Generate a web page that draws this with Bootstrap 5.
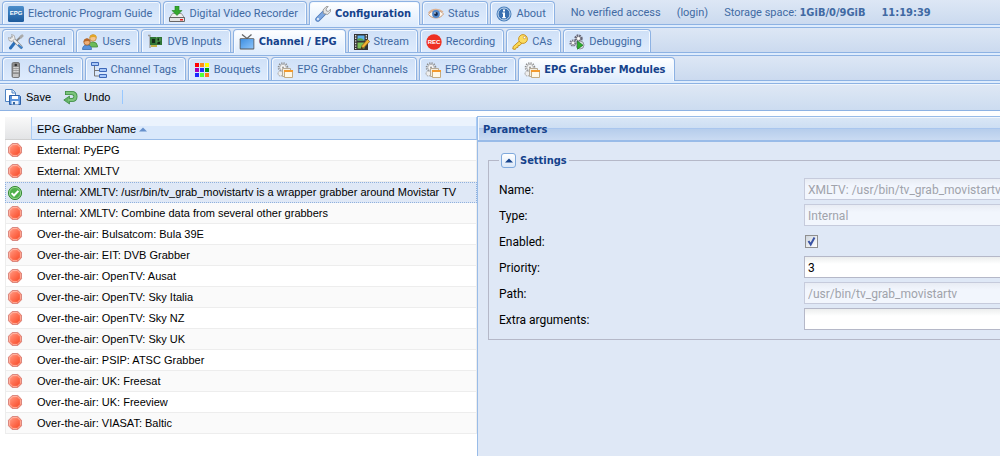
<!DOCTYPE html>
<html lang="en">
<head>
<meta charset="utf-8">
<meta name="viewport" content="width=device-width, initial-scale=1">
<title>Tvheadend - EPG Grabber Modules</title>
<link href="https://cdn.jsdelivr.net/npm/bootstrap@5.3.0/dist/css/bootstrap.min.css" rel="stylesheet">
<style>
:root { --line: #8db2e3; --ui: Roboto, Tahoma, sans-serif; --ui-bold: "DejaVu Sans Condensed", Tahoma, sans-serif; --arial: "Liberation Sans", Arial, sans-serif; }
body { font: 11px/16px var(--ui); color: #000; background: #fff; min-height: 100vh; overflow-x: hidden; }
svg { flex: none; }
b { font-family: var(--ui-bold); }
.tabstrip { background: linear-gradient(#dde7f5, #cbdaef); border-bottom: 1px solid var(--line); padding: 1px 2px 0; height: 25px; gap: 2px; }
.tabstrip + .tabstrip { border-top: 1px solid var(--line); margin-top: 2px; height: 26px; }
.tabstrip .nav-link { display: flex; align-items: center; gap: 4px; height: 23px; padding: 1px 8px 0 5px; color: #416aa3; border: 1px solid var(--line); border-bottom: 0; border-radius: 4px 4px 0 0; background: linear-gradient(#cfe0f7, #deebfd); box-shadow: inset 1px 1px #f4f9ff, inset -1px 0 #f4f9ff; white-space: nowrap; }
.tabstrip .nav-link.active { color: #15428b; font-family: var(--ui-bold); font-weight: 700; background: linear-gradient(#fff, #deecfd); height: 24px; margin-bottom: -1px; }
.tabs-bg { background: #deecfd; }
.statusline { color: #416aa3; gap: 16px; margin-left: 14px; padding-top: 1px; white-space: nowrap; }
.statusline a { color: inherit; text-decoration: none; }
.actions { height: 28px; margin-top: 2px; border-top: 1px solid var(--line); border-bottom: 1px solid var(--line); box-shadow: inset 0 1px #f0f5fb; background: linear-gradient(#dfe8f5, #ccdcf0); padding: 0 5px; }
.actions button { font: 11px/16px var(--arial); border: 0; background: none; padding: 0; margin-right: 12px; gap: 5px; }
.actions .vr { width: 1px; height: 14px; background: #98c8ff; opacity: 1; margin-top: 6px; }
.gridpane { width: 47.7%; padding: 6px 0 0 5px; }
.gridpane table { width: 100%; font: 11px/15px var(--arial); border-collapse: separate; border-spacing: 0; }
.gridpane th { height: 23px; padding: 2px 5px 0; font-weight: 400; border-bottom: 1px solid #99bce8; background: linear-gradient(#ebf3fd 39%, #d9e8fb 39%); border-right: 1px solid #aaccf6; }
.gridpane th:first-child { width: 27px; padding: 0; background: linear-gradient(#f9f9f9, #e3e4e6); border-bottom-color: #d0d0d0; }
.gridpane td { height: 21px; padding: 0 5px; border-bottom: 1px solid #ededed; border-right: 1px solid #ededed; white-space: nowrap; }
.gridpane td:first-child { padding: 0 0 0 1px; border-left: 1px solid #ededed; border-right: 0; }
.gridpane td svg { display: block; }
.gridpane tbody tr:nth-child(even) td { background: #fafafa; }
.gridpane tbody tr.selected td { background: #dfe8f6; border-top: 1px dotted #8fb0dd; border-bottom: 1px dotted #8fb0dd; }
.gridpane tbody tr.selected td:first-child { border-left: 1px dotted #8fb0dd; }
.gridpane tbody tr.selected td:last-child { border-right: 1px dotted #8fb0dd; }
.params { margin-top: 5px; background: #dfe8f6; border: solid #99bce8; border-width: 1px 0 0 1px; }
.params h2 { font: 700 11px/16px var(--ui-bold); color: #15428b; margin: 0; height: 25px; padding: 5px 5px 0; border-bottom: 2px solid #99bbe8; box-shadow: inset 1px 1px #f4f8fd; background: linear-gradient(#dae7f6, #cddef3 11px, #a9c6ee 11px, #a9c6ee 12px, #b6cdec 12px, #cadbf2); }
.params fieldset { margin: 10px 0 0 10px; border: solid #b5b8c8; border-width: 1px 0 1px 1px; padding: 0 0 5px 10px; }
.params legend { float: none; width: auto; font: 700 11px/18px var(--ui-bold); color: #15428b; margin: 0 0 10px; padding: 0 2px; gap: 4px; background: #dfe8f6; height: 16px; }
.params legend span { padding-top: 2px; }
.params legend button { width: 15px; height: 15px; padding: 0; border: 1px solid #7fa9dc; border-radius: 3px; background: linear-gradient(#fff, #dbe8f8); }
.field { height: 22px; margin-bottom: 4px; }
.field label { width: 305px; flex: none; font-size: 12px; padding-top: 2px; }
.field input[type=text] { font: 12px/16px var(--ui); flex: 1; min-width: 0; height: 22px; border: solid #b5b8c8; border-width: 1px 0 1px 1px; border-radius: 0; padding: 2px 0 0 3px; background: linear-gradient(#eceeee, #fff 7px); }
.field input[type=text]:disabled { color: #a0a3ab; border-color: #c6cbdc; background: linear-gradient(#e8ecf4, #f2f6fd 7px); }
.field input[type=checkbox] { appearance: none; width: 13px; height: 13px; margin: 0 0 0 1px; border: 1px solid #8f8f8f; background: linear-gradient(135deg, #cfd6de, #fff); }
.field input:checked { background: url("data:image/svg+xml,%3Csvg xmlns='http://www.w3.org/2000/svg' viewBox='0 0 11 11'%3E%3Cpath d='M2.5 5l2.2 3.5L8.5 1.5' fill='none' stroke='%233a53a4' stroke-width='2'/%3E%3C/svg%3E"), linear-gradient(135deg, #cfd6de, #fff); }
</style>
</head>
<body class="d-flex flex-column">
<svg width="0" height="0" class="position-absolute" aria-hidden="true">
  <defs>
    <linearGradient id="rg" x1="0" y1="0" x2="1" y2="1"><stop offset="0" stop-color="#ffa590"/><stop offset=".45" stop-color="#ff7457"/><stop offset="1" stop-color="#f5401c"/></linearGradient>
    <linearGradient id="bg" x1="0" y1="0" x2="0" y2="1"><stop offset="0" stop-color="#4c8ecb"/><stop offset="1" stop-color="#1c5a9c"/></linearGradient>
    <linearGradient id="tv" x1="0" y1="0" x2="1" y2="1"><stop offset="0" stop-color="#3f8fe0"/><stop offset="1" stop-color="#8cc4fb"/></linearGradient>
    <symbol id="off" viewBox="0 0 16 16"><path d="M5.200 1.500h5.600l3.700 3.700v5.600l-3.700 3.700H5.200l-3.700-3.700V5.200z" fill="url(#rg)" stroke="#d98880"/><path d="M5.700 2.600h4.600l3.100 3.100v4.600l-3.100 3.100H5.700l-3.100-3.100V5.700z" fill="none" stroke="#ffc4b5" stroke-width=".8"/></symbol>
    <symbol id="on" viewBox="0 0 16 16"><circle cx="8" cy="8" r="6.600" fill="#4fb04a" stroke="#3a8c38"/><circle cx="8" cy="8" r="5.600" fill="none" stroke="#a5dba0" stroke-width=".8"/><path d="M4.600 8.100l2.400 2.400 4.400-4.600" fill="none" stroke="#fff" stroke-width="2"/></symbol>
    <symbol id="grab" viewBox="0 0 16 16"><circle cx="6" cy="5.500" r="4.400" fill="none" stroke="#8c8c8c" stroke-width="1.800" stroke-dasharray="1.200 1.100"/><circle cx="6" cy="5.500" r="3.200" fill="#f4f4f4" stroke="#aaa" stroke-width=".8"/><circle cx="6" cy="5.500" r="1" fill="#999"/><circle cx="3.500" cy="11.500" r="2.500" fill="#eee" stroke="#999" stroke-dasharray="1.400 .8"/><path d="M5.500 6.500h8v8h-8z" fill="#f3eee2" stroke="#b5aa98"/><path d="M7.500 8.500h8v7h-8z" fill="#fff8e6" stroke="#c4ab80"/><path d="M7 8h9v2H7z" fill="#f39a2c"/></symbol>
  </defs>
</svg>
<header class="tabs-bg">
  <nav class="tabstrip nav flex-nowrap" aria-label="Main">
    <a class="nav-link" href="#"><svg width="16" height="16" viewBox="0 0 16 16"><rect width="16" height="16" rx="1.500" fill="url(#bg)"/><text x="8" y="9" font-family="Liberation Sans" font-size="6" font-weight="700" fill="#fff" text-anchor="middle">EPG</text></svg>Electronic Program Guide</a>
    <a class="nav-link" href="#"><svg width="16" height="16" viewBox="0 0 16 16"><path d="M3.500 7.500h9l3 4.500H.5z" fill="#eee" stroke="#999"/><path d="M.5 11.500h15v4H.5z" fill="#e3e3e3" stroke="#666"/><path d="M11 13h3v1.500h-3z" fill="#e22"/><path d="M6 0h4v4.500h3L8 9.500 3 4.500h3z" fill="#35a82e" stroke="#1d801b" stroke-width=".6"/></svg>Digital Video Recorder</a>
    <a class="nav-link active" href="#" aria-current="page"><svg width="16" height="16" viewBox="0 0 16 16"><path d="M2.800 13.200L8.500 7.500" stroke="#4c78b8" stroke-width="5" stroke-linecap="round"/><path d="M2.800 13.200L8.500 7.500" stroke="#7fa8e0" stroke-width="3.400" stroke-linecap="round"/><circle cx="3" cy="13" r=".9" fill="#fff"/><path d="M8.500 7.500L8 4l3-3.300 2.200-.2L11 3l.5 2 2 .4 2-2.200.1 2.500L12.500 8.500z" fill="#e4e4e4" stroke="#8a8a8a" stroke-width=".8"/></svg>Configuration</a>
    <a class="nav-link" href="#"><svg width="16" height="16" viewBox="0 0 16 16"><path d="M.5 8.500C3 4 12 3 15.500 8 12 13.500 4 13 .5 8.500z" fill="#fdf6ee" stroke="#c99d7c"/><path d="M.5 7C4 2.500 11 2.500 15 6" fill="none" stroke="#dcb294" stroke-width="1.500"/><circle cx="8" cy="8" r="3.900" fill="#4f86c9"/><circle cx="8" cy="8" r="1.900" fill="#182a4a"/><circle cx="7" cy="7" r=".8" fill="#fff"/></svg>Status</a>
    <a class="nav-link" href="#"><svg width="16" height="16" viewBox="0 0 16 16"><circle cx="8" cy="8" r="7.500" fill="#4a80bd"/><circle cx="8" cy="8" r="6" fill="#3a70b0" stroke="#c5d9ee"/><path d="M7 3.500h2v2H7zM6.300 6.500H9v4.500h.8v1.200H6.200V11H7V7.700h-.7z" fill="#fff"/></svg>About</a>
    <div class="statusline d-flex align-items-center"><span>No verified access</span><a href="#">(login)</a><span>Storage space: <b>1GiB/0/9GiB</b></span><b>11:19:39</b></div>
  </nav>
  <nav class="tabstrip nav flex-nowrap" aria-label="Configuration">
    <a class="nav-link" href="#"><svg width="16" height="16" viewBox="0 0 16 16"><path d="M13.500 2L6 9.500" stroke="#888" stroke-width="1.800"/><path d="M12 4l3-3" stroke="#aaa" stroke-width="2.500"/><path d="M6.500 9L2.500 14" stroke="#2b6fb8" stroke-width="3" stroke-linecap="round"/><path d="M4 4l9 9" stroke="#8c8c8c" stroke-width="3.200" stroke-linecap="round"/><path d="M4 4l9 9" stroke="#f0f0f0" stroke-width="1.800" stroke-linecap="round"/><path d="M3.500.5l1 2.500-1.500 1.500L.5 3.500l.5 3 3 1 3-3-.8-3z" fill="#eee" stroke="#999" stroke-width=".7"/><path d="M10.500 10l4.500 3.500-1.500 1.800-4-3.800z" fill="#3d80c8"/></svg>General</a>
    <a class="nav-link" href="#"><svg width="16" height="16" viewBox="0 0 16 16"><path d="M7 13V9.500Q8 8 11 8q4 0 4.500 4v1z" fill="#6cbb58" stroke="#458b38" stroke-width=".8"/><circle cx="11" cy="4" r="3.300" fill="#f5c48c" stroke="#b07c35" stroke-width=".7"/><path d="M7.500 4Q8 .2 11.500.4T14.500 4Q12 2 7.500 4z" fill="#e0a628"/><path d="M.5 15.500Q.5 11 5 11t4.500 4.500z" fill="#5a93dc" stroke="#356cb1" stroke-width=".8"/><circle cx="5" cy="8" r="3.200" fill="#f0b078" stroke="#995420" stroke-width=".7"/><path d="M1.600 8Q2 4.500 5 4.500T8.400 8Q6 6 1.600 8z" fill="#b8692a"/></svg>Users</a>
    <a class="nav-link" href="#"><svg width="16" height="16" viewBox="0 0 16 16"><path d="M1 1.500h2V14" fill="none" stroke="#999" stroke-width="1.300"/><path d="M3 3h12v8H3z" fill="#2f7436"/><path d="M4 11h6v2H4z" fill="#c2b14a"/><path d="M5 5h3v4H5zM10 4.500h2v2h-2zM10 8h3v2h-3z" fill="#132b17"/><path d="M9 3.500h1v6M13 4v3" fill="none" stroke="#7db86a" stroke-width=".6"/></svg>DVB Inputs</a>
    <a class="nav-link active" href="#" aria-current="page"><svg width="16" height="16" viewBox="0 0 16 16"><path d="M3 .5l5 4L12.500.5" fill="none" stroke="#666" stroke-width="1.300"/><rect x=".7" y="4.200" width="14.600" height="11.300" rx="1" fill="#555"/><rect x="1.500" y="5" width="13" height="9.500" fill="url(#tv)"/></svg>Channel / EPG</a>
    <a class="nav-link" href="#"><svg width="16" height="16" viewBox="0 0 16 16"><path d="M0 0h14v16H0z" fill="#333"/><path d="M3.500 1.500h7v5h-7z" fill="#5bb0ee"/><path d="M3.500 8.500h7v6h-7z" fill="#7bc056"/><path d="M3.500 5Q7 3 10.500 6.500h-7z" fill="#5da83d"/><path d="M1.700 1v14M12.300 1v7" stroke="#eee" stroke-width="1.200" stroke-dasharray="1.400 1.200"/><path d="M7 15l1-3.500 5.500-6 2.200 2L10 13.500z" fill="#f2b431" stroke="#8a5d1d" stroke-width=".8"/><path d="M7 15l.6-2.200 1.600 1.500z" fill="#222"/></svg>Stream</a>
    <a class="nav-link" href="#"><svg width="16" height="16" viewBox="0 0 16 16"><circle cx="8" cy="8" r="7.700" fill="#ee2f22"/><text x="8" y="10" font-family="Liberation Sans" font-size="6" font-weight="700" fill="#fff" text-anchor="middle">REC</text></svg>Recording</a>
    <a class="nav-link" href="#"><svg width="16" height="16" viewBox="0 0 16 16"><path d="M8 6.500L1.200 12.500.8 15l2.500.4 1-1.800 1.600-.2.300-1.800 1.700-.2L10 9z" fill="#fbd955" stroke="#c08a1c" stroke-width=".9"/><circle cx="11" cy="5" r="4.400" fill="#fbdc60" stroke="#c8901e" stroke-width=".9"/><circle cx="12.500" cy="3.500" r="1.200" fill="#fff" stroke="#b8821c" stroke-width=".6"/></svg>CAs</a>
    <a class="nav-link" href="#"><svg width="16" height="16" viewBox="0 0 16 16"><circle cx="9.500" cy="4.500" r="3" fill="#ccc" stroke="#667" stroke-width="2.400" stroke-dasharray="1.600 .8"/><circle cx="4" cy="9" r="2.500" fill="#ddd" stroke="#778" stroke-width="2.200" stroke-dasharray="1.400 .7"/><circle cx="9.500" cy="4.500" r="1.200" fill="#fff"/><circle cx="4" cy="9" r="1" fill="#fff"/><circle cx="11" cy="11" r="4" fill="#d6dde2" stroke="#778" stroke-width=".7"/><path d="M8.500 7.200l5.500 4-5.500 4z" fill="#2fae2c" stroke="#167a18" stroke-width=".7"/></svg>Debugging</a>
  </nav>
  <nav class="tabstrip nav flex-nowrap" aria-label="Channel and EPG">
    <a class="nav-link" href="#"><svg width="16" height="16" viewBox="0 0 16 16"><rect x="4" y=".5" width="7.500" height="15" rx="1.500" fill="#8e8e8e" stroke="#666" stroke-width=".8"/><path d="M5 12h5.500v3H5z" fill="#c4c4c4"/><circle cx="7.800" cy="3" r="1.300" fill="#333"/><path d="M5.500 5.700h5M5.500 7.700h5M5.500 9.700h5" stroke="#f3f3f3" stroke-width="1.200" stroke-dasharray="1.200 .7"/></svg>Channels</a>
    <a class="nav-link" href="#"><svg width="16" height="16" viewBox="0 0 16 16"><path d="M3.500 4v10h5M3.500 8.500h5" fill="none" stroke="#777"/><g fill="#a8c8f8" stroke="#3e68b8"><path d="M.5.500h7v3h-7zM8.500 6.500h7v3h-7zM8.500 12.500h7v3h-7z"/></g></svg>Channel Tags</a>
    <a class="nav-link" href="#"><svg width="16" height="16" viewBox="0 0 16 16"><path d="M1 1h4v4H1z" fill="#f00"/><path d="M6 1h4v4H6z" fill="#ff8c1a"/><path d="M11 1h4v4h-4z" fill="#ff0"/><path d="M1 6h4v4H1z" fill="#a400b4"/><path d="M6 6h4v4H6z" fill="#2030ff"/><path d="M11 6h4v4h-4z" fill="#009a10"/><path d="M1 11h4v4H1z" fill="#1a28ff"/><path d="M6 11h4v4H6z" fill="#53ff3a"/><path d="M11 11h4v4h-4z" fill="#ff7a1a"/></svg>Bouquets</a>
    <a class="nav-link" href="#"><svg width="16" height="16"><use href="#grab"/></svg>EPG Grabber Channels</a>
    <a class="nav-link" href="#"><svg width="16" height="16"><use href="#grab"/></svg>EPG Grabber</a>
    <a class="nav-link active" href="#" aria-current="page"><svg width="16" height="16"><use href="#grab"/></svg>EPG Grabber Modules</a>
  </nav>
  <div class="pt-0">
    <div class="actions d-flex align-items-center">
      <button type="button" class="d-flex align-items-center"><svg width="16" height="16" viewBox="0 0 16 16"><path d="M.5.500h7l3 3v9H.5z" fill="#fff" stroke="#4f84c4"/><path d="M7 .5V4h3.500" fill="#d8e8fa" stroke="#4f84c4"/><path d="M4.500 6.500h10l1 1v8h-11z" fill="#5d96de" stroke="#2c5fa6"/><path d="M7 7h6v3H7z" fill="#fff"/><path d="M6.500 12h7v3.500h-7z" fill="#e8f0fa"/><path d="M8 13h2v2.500H8z" fill="#33659f"/></svg>Save</button>
      <button type="button" class="d-flex align-items-center"><svg width="16" height="16" viewBox="0 0 16 16"><path d="M2 4h6.500q4 0 4 3.500t-4 3.500H5.500" fill="none" stroke="#3f8d46" stroke-width="4"/><path d="M6.500 7v8L.8 11z" fill="#62b264" stroke="#3f8d46" stroke-width=".8"/><path d="M2.800 4h5.700q4 0 4 3.500t-4 3.500H5" fill="none" stroke="#7cc47c" stroke-width="2.400"/></svg>Undo</button>
      <span class="vr align-self-start"></span>
    </div>
  </div>
</header>
<main class="d-flex flex-grow-1">
  <section class="gridpane flex-shrink-0">
    <table>
      <thead><tr><th aria-label="Status"></th><th scope="col">EPG Grabber Name <svg width="8" height="5" viewBox="0 0 8 5"><path d="M0 4.500L4 .5l4 4z" fill="#6690cc"/></svg></th></tr></thead>
      <tbody>
        <tr><td><svg width="16" height="16"><use href="#off"/></svg></td><td>External: PyEPG</td></tr>
        <tr><td><svg width="16" height="16"><use href="#off"/></svg></td><td>External: XMLTV</td></tr>
        <tr class="selected"><td><svg width="16" height="16"><use href="#on"/></svg></td><td>Internal: XMLTV: /usr/bin/tv_grab_movistartv is a wrapper grabber around Movistar TV</td></tr>
        <tr><td><svg width="16" height="16"><use href="#off"/></svg></td><td>Internal: XMLTV: Combine data from several other grabbers</td></tr>
        <tr><td><svg width="16" height="16"><use href="#off"/></svg></td><td>Over-the-air: Bulsatcom: Bula 39E</td></tr>
        <tr><td><svg width="16" height="16"><use href="#off"/></svg></td><td>Over-the-air: EIT: DVB Grabber</td></tr>
        <tr><td><svg width="16" height="16"><use href="#off"/></svg></td><td>Over-the-air: OpenTV: Ausat</td></tr>
        <tr><td><svg width="16" height="16"><use href="#off"/></svg></td><td>Over-the-air: OpenTV: Sky Italia</td></tr>
        <tr><td><svg width="16" height="16"><use href="#off"/></svg></td><td>Over-the-air: OpenTV: Sky NZ</td></tr>
        <tr><td><svg width="16" height="16"><use href="#off"/></svg></td><td>Over-the-air: OpenTV: Sky UK</td></tr>
        <tr><td><svg width="16" height="16"><use href="#off"/></svg></td><td>Over-the-air: PSIP: ATSC Grabber</td></tr>
        <tr><td><svg width="16" height="16"><use href="#off"/></svg></td><td>Over-the-air: UK: Freesat</td></tr>
        <tr><td><svg width="16" height="16"><use href="#off"/></svg></td><td>Over-the-air: UK: Freeview</td></tr>
        <tr><td><svg width="16" height="16"><use href="#off"/></svg></td><td>Over-the-air: VIASAT: Baltic</td></tr>
      </tbody>
    </table>
  </section>
  <section class="params flex-grow-1">
    <h2>Parameters</h2>
    <form>
      <fieldset>
        <legend class="d-flex align-items-center"><button type="button" class="d-flex align-items-center justify-content-center" aria-label="Collapse"><svg width="8" height="5" viewBox="0 0 8 5"><path d="M0 4.500L4 .5l4 4z" fill="#15428b"/></svg></button><span>Settings</span></legend>
        <div class="field d-flex align-items-center"><label for="f-name">Name:</label><input type="text" id="f-name" value="XMLTV: /usr/bin/tv_grab_movistartv" disabled></div>
        <div class="field d-flex align-items-center"><label for="f-type">Type:</label><input type="text" id="f-type" value="Internal" disabled></div>
        <div class="field d-flex align-items-center"><label for="f-on">Enabled:</label><input type="checkbox" id="f-on" checked></div>
        <div class="field d-flex align-items-center"><label for="f-prio">Priority:</label><input type="text" id="f-prio" value="3"></div>
        <div class="field d-flex align-items-center"><label for="f-path">Path:</label><input type="text" id="f-path" value="/usr/bin/tv_grab_movistartv" disabled></div>
        <div class="field d-flex align-items-center"><label for="f-args">Extra arguments:</label><input type="text" id="f-args"></div>
      </fieldset>
    </form>
  </section>
</main>
<script src="https://cdn.jsdelivr.net/npm/bootstrap@5.3.0/dist/js/bootstrap.bundle.min.js"></script>
</body>
</html>
